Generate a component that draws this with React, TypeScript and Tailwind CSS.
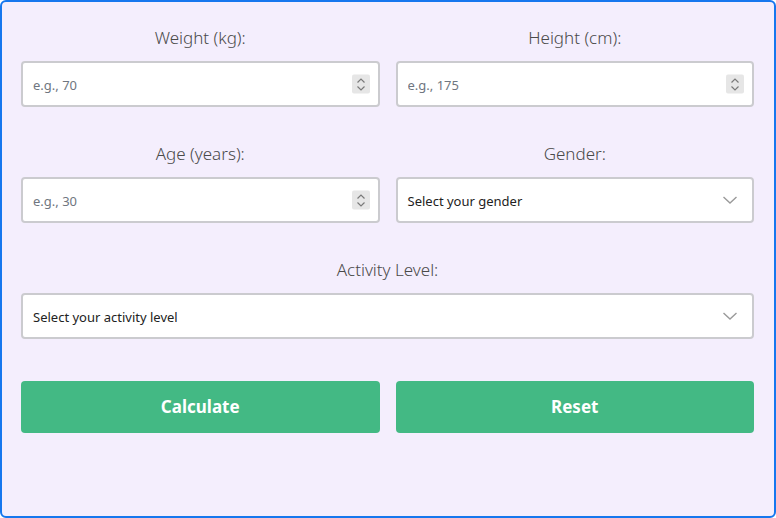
import React from "react";

function Spinner() {
  return (
    <div className="absolute right-[10px] top-1/2 -translate-y-1/2 flex h-[19px] w-[18px] items-center justify-center rounded-[2px] bg-[#e6e6e6]">
      <svg width="10" height="16" viewBox="0 0 10 16" fill="none" stroke="#7a7a7a" strokeWidth="1.2">
        <path d="M1.5 6 L5 2.5 L8.5 6" />
        <path d="M1.5 10 L5 13.5 L8.5 10" />
      </svg>
    </div>
  );
}

function Chevron() {
  return (
    <svg
      className="absolute right-[14px] top-1/2 -translate-y-1/2"
      width="16"
      height="10"
      viewBox="0 0 16 10"
      fill="none"
      stroke="#9a9a9a"
      strokeWidth="1.4"
    >
      <path d="M1.5 2 L8 8 L14.5 2" />
    </svg>
  );
}

function Label({ children }: { children: React.ReactNode }) {
  return (
    <div className="mb-[11px] text-center text-[17px] leading-6 font-light text-[#4a4a4a]">
      {children}
    </div>
  );
}

function NumberField({ label, placeholder }: { label: string; placeholder: string }) {
  return (
    <div>
      <Label>{label}</Label>
      <div className="relative">
        <input
          type="text"
          placeholder={placeholder}
          className="h-[46px] w-full rounded-[4px] border-2 border-[#cbcbcf] bg-white px-[10px] pt-[2px] text-[13px] text-[#222] placeholder:text-[#6f7680] outline-none"
        />
        <Spinner />
      </div>
    </div>
  );
}

function SelectField({ label, text }: { label: string; text: string }) {
  return (
    <div>
      <Label>{label}</Label>
      <div className="relative flex h-[46px] w-full items-center rounded-[4px] border-2 border-[#cbcbcf] bg-white px-[10px] pt-[3px] text-[13px] text-[#222]">
        {text}
        <Chevron />
      </div>
    </div>
  );
}

export default function App() {
  return (
    <div
      className="h-[518px] w-[776px] rounded-[6px] border-2 border-[#1677ee] bg-[#f4eefd] pl-[19px] pr-[20px] pt-[24px]"
      style={{ fontFamily: '"Noto Sans", "Open Sans", sans-serif' }}
    >
      <div className="grid grid-cols-2 gap-x-4 gap-y-[35px]">
        <NumberField label="Weight (kg):" placeholder="e.g., 70" />
        <NumberField label="Height (cm):" placeholder="e.g., 175" />
        <NumberField label="Age (years):" placeholder="e.g., 30" />
        <SelectField label="Gender:" text="Select your gender" />
        <div className="col-span-2">
          <SelectField label="Activity Level:" text="Select your activity level" />
        </div>
      </div>
      <div className="mt-[42px] grid grid-cols-2 gap-4">
        <button className="h-[52px] rounded-[4px] bg-[#43b984] text-[17px] font-bold text-white">
          Calculate
        </button>
        <button className="h-[52px] rounded-[4px] bg-[#43b984] text-[17px] font-bold text-white">
          Reset
        </button>
      </div>
    </div>
  );
}
